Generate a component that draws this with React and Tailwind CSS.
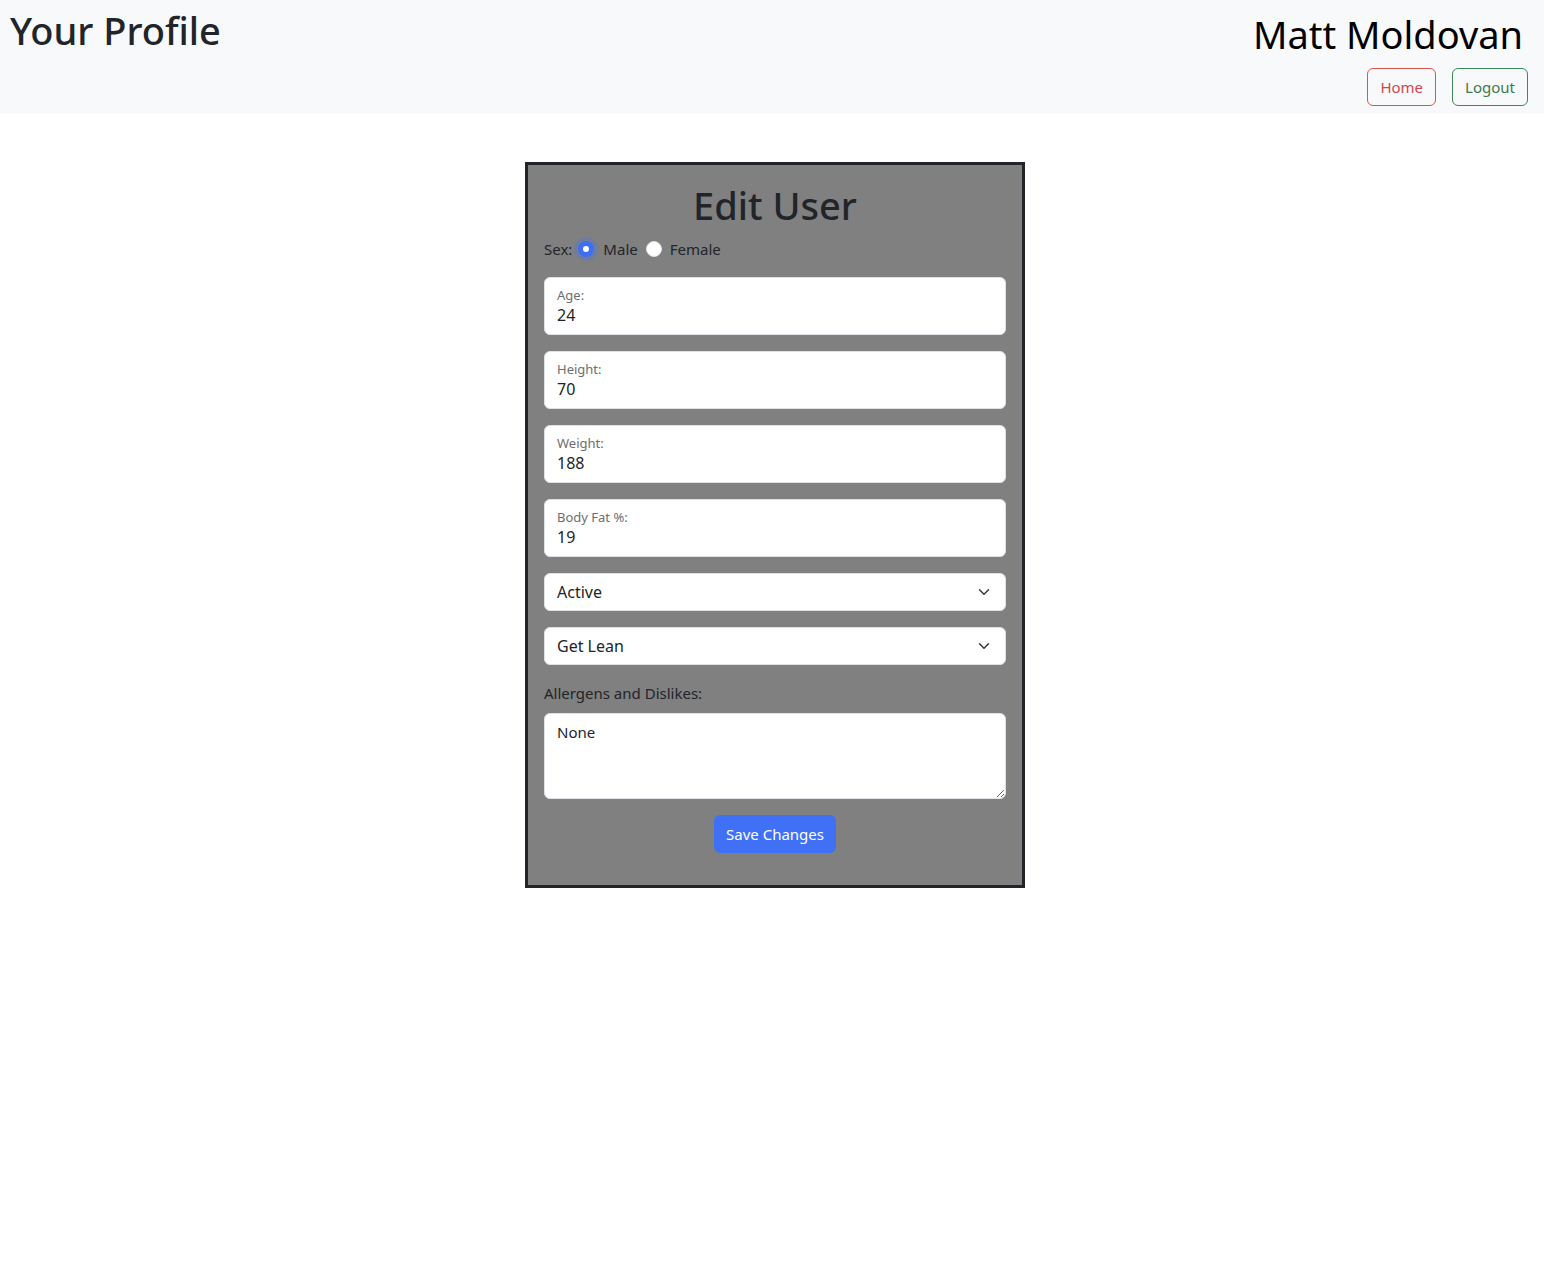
import React from "react";

const font = { fontFamily: '"Noto Sans", "Open Sans", sans-serif' };

function FloatInput({ label, value }) {
  return (
    <div className="relative h-[58px] rounded-[6px] border border-[#dee2e6] bg-white px-[12px]">
      <div className="pt-[7px] text-[13px] leading-[20px] text-[#6c6e71]">{label}</div>
      <input
        className="block w-full bg-transparent text-[16px] leading-[20px] text-[#212529] outline-none"
        defaultValue={value}
        style={font}
      />
    </div>
  );
}

function Select({ value }) {
  return (
    <div className="relative flex h-[38px] items-center rounded-[6px] border border-[#dee2e6] bg-white pl-[12px] text-[16px] text-[#212529]">
      <span>{value}</span>
      <svg className="absolute right-[15px] top-[12px]" width="12" height="12" viewBox="0 0 16 16">
        <path d="M2 5l6 6 6-6" fill="none" stroke="#343a40" strokeWidth="2" strokeLinecap="round" strokeLinejoin="round" />
      </svg>
    </div>
  );
}

export default function App() {
  return (
    <div className="min-h-[1265px] bg-white text-[#212529]" style={font}>
      <header className="flex h-[113px] justify-between bg-[#f8f9fa]">
        <h1 className="m-0 pl-[10px] pt-[6px] text-[38px] font-medium leading-[48px] text-[#212529]">Your Profile</h1>
        <div className="flex flex-col items-end pr-[16px] pt-[10px]">
          <div className="pr-[5px] text-[38px] font-normal leading-[48px] text-black">Matt Moldovan</div>
          <div className="mt-[10px] flex gap-[16px]">
            <button className="h-[38px] rounded-[6px] border border-[#d9534f] px-[12px] text-[15px] text-[#d0454f]">Home</button>
            <button className="h-[38px] rounded-[6px] border border-[#3c8a5c] px-[12px] text-[15px] text-[#3c7a50]">Logout</button>
          </div>
        </div>
      </header>

      <div className="flex justify-center pl-[6px] pt-[49px]">
        <div className="w-[500px] border-[3px] border-[#212529] bg-[#808080] px-[16px] pb-[32px] pt-[16px]">
          <h2 className="text-center text-[38px] font-medium leading-[48px] text-[#212529]">Edit User</h2>
          <div className="mt-[8px] flex h-[24px] items-center text-[15px] text-[#212529]">
            <span>Sex:</span>
            <span className="ml-[6px] flex h-[16px] w-[16px] items-center justify-center rounded-full bg-[#3d6ef5] ring-4 ring-[#3d6ef5]/25">
              <span className="h-[6px] w-[6px] rounded-full bg-white" />
            </span>
            <span className="ml-[9px]">Male</span>
            <span className="ml-[8px] h-[16px] w-[16px] rounded-full border border-[#dee2e6] bg-white" />
            <span className="ml-[8px]">Female</span>
          </div>
          <div className="mt-[16px] flex flex-col gap-[16px]">
            <FloatInput label="Age:" value="24" />
            <FloatInput label="Height:" value="70" />
            <FloatInput label="Weight:" value="188" />
            <FloatInput label="Body Fat %:" value="19" />
            <Select value="Active" />
            <Select value="Get Lean" />
          </div>
          <div className="mt-[16px] text-[15px] leading-[24px] text-[#212529]">Allergens and Dislikes:</div>
          <textarea
            className="mt-[8px] block h-[86px] w-full resize-y rounded-[6px] border border-[#dee2e6] bg-white px-[12px] py-[6px] text-[15px] leading-[24px] text-[#212529] outline-none"
            defaultValue="None"
            style={font}
          />
          <div className="mt-[16px] flex justify-center">
            <button className="h-[38px] rounded-[6px] bg-[#3f70f6] px-[12px] text-[15px] text-white">Save Changes</button>
          </div>
        </div>
      </div>
    </div>
  );
}
